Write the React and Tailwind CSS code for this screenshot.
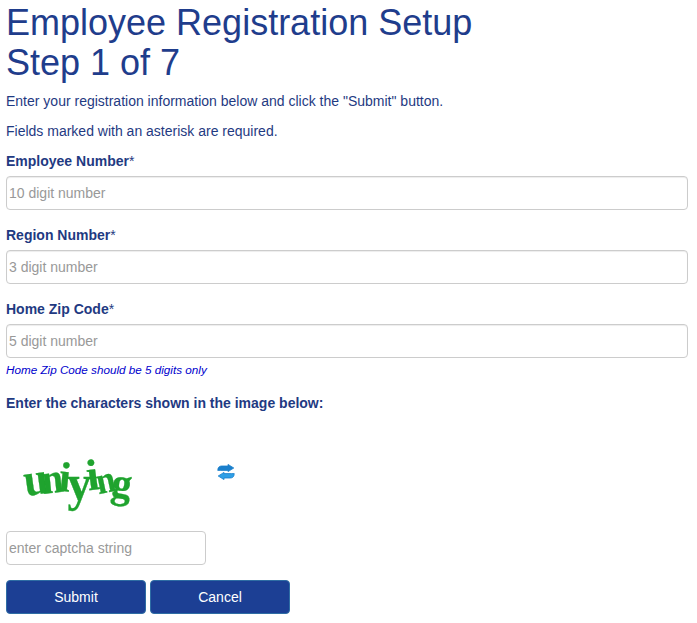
const font = "font-['Liberation_Sans',Arial,sans-serif]";

function Field({ label, placeholder, hint }) {
  return (
    <div className="mb-[15px]">
      <label className="mb-[5px] block h-[20px] text-[14px] leading-[20px]">
        <span className="font-bold">{label}</span>*
      </label>
      <input
        placeholder={placeholder}
        className="block h-[34px] w-full rounded-[4px] border border-[#cccccc] bg-white px-[2px] text-[14px] text-[#333333] placeholder:text-[#999999] shadow-[inset_0_1px_1px_rgba(0,0,0,0.075)] outline-none"
      />
      {hint && <p className="mt-[3px] h-[17px] text-[11.7px] italic leading-[17px] text-[#0000cd]">{hint}</p>}
    </div>
  );
}

const letters = [
  ["u", -8, 0, 46, 20, 0.95],
  ["n", -6, -1, 42, 19, 0.9],
  ["i", 6, -3, 42, 10, 1],
  ["y", 0, 3, 50, 22, 0.95],
  ["i", -8, -4, 44, 10, 1],
  ["n", -12, 0, 38, 18, 0.9],
  ["g", 8, 3, 42, 20, 0.95],
];

function Captcha() {
  return (
    <div className="flex h-[110px] items-start">
      <div
        aria-label="captcha"
        className="mt-[32px] flex h-[70px] w-[130px] items-center pl-[17px] font-['Liberation_Serif',serif] font-bold leading-none text-[#1fa32e] blur-[0.5px] [-webkit-text-stroke:0.3px_#1fa32e]"
      >
        {letters.map(([c, r, y, s, w, sx], i) => (
          <span
            key={i}
            className="inline-block shrink-0"
            style={{ transform: `rotate(${r}deg) translateY(${y}px) scaleX(${sx})`, fontSize: s, width: w - 2 + (i === 6 ? 0 : 0.3) }}
          >
            {c}
          </span>
        ))}
      </div>
      <svg viewBox="0 0 18 16" className="ml-[81px] mt-[51px] h-[16px] w-[18px] blur-[0.3px]">
        <path d="M.8 6.500C.8 3 2.500 2 5 2h6V.4L16.800 4 11 7.600V6.400H3.500C2.300 6.400 1.300 6.400.8 6.500Z" fill="#1a7fcc" stroke="#1a7fcc" strokeWidth=".8" strokeLinejoin="round" />
        <path d="M17.200 9.500c0 3.500-1.700 4.500-4.200 4.500H7v1.600L1.200 12 7 8.400v1.200h7.500c1.200 0 2.200 0 2.700-.1Z" fill="#2f9fe6" stroke="#1a7fcc" strokeWidth=".8" strokeLinejoin="round" />
      </svg>
    </div>
  );
}

export default function App() {
  return (
    <div className={`${font} min-h-[623px] bg-white pl-[6px] pr-[9px] pt-[3px] text-[#1f3a82]`}>
      <h1 className="mb-[9px] text-[36px] font-normal leading-[39.6px] text-[#1f3d8c]">
        Employee Registration Setup
        <br />
        Step 1 of 7
      </h1>
      <p className="mb-[10px] h-[20px] text-[14px] leading-[20px]">
        Enter your registration information below and click the "Submit" button.
      </p>
      <p className="mb-[10px] h-[20px] text-[14px] leading-[20px]">Fields marked with an asterisk are required.</p>
      <Field label="Employee Number" placeholder="10 digit number" />
      <Field label="Region Number" placeholder="3 digit number" />
      <Field label="Home Zip Code" placeholder="5 digit number" hint="Home Zip Code should be 5 digits only" />
      <p className="h-[20px] text-[14px] font-bold leading-[20px]">Enter the characters shown in the image below:</p>
      <Captcha />
      <input
        placeholder="enter captcha string"
        className="mt-[8px] block h-[34px] w-[200px] rounded-[4px] border border-[#cccccc] bg-white px-[2px] text-[14px] placeholder:text-[#999999] outline-none"
      />
      <div className="mt-[15px] flex gap-[4px]">
        <button className="h-[34px] w-[140px] rounded-[4px] border border-[#2e6da4] bg-[#1c3f94] text-[14px] text-white">
          Submit
        </button>
        <button className="h-[34px] w-[140px] rounded-[4px] border border-[#2e6da4] bg-[#1c3f94] text-[14px] text-white">
          Cancel
        </button>
      </div>
    </div>
  );
}
